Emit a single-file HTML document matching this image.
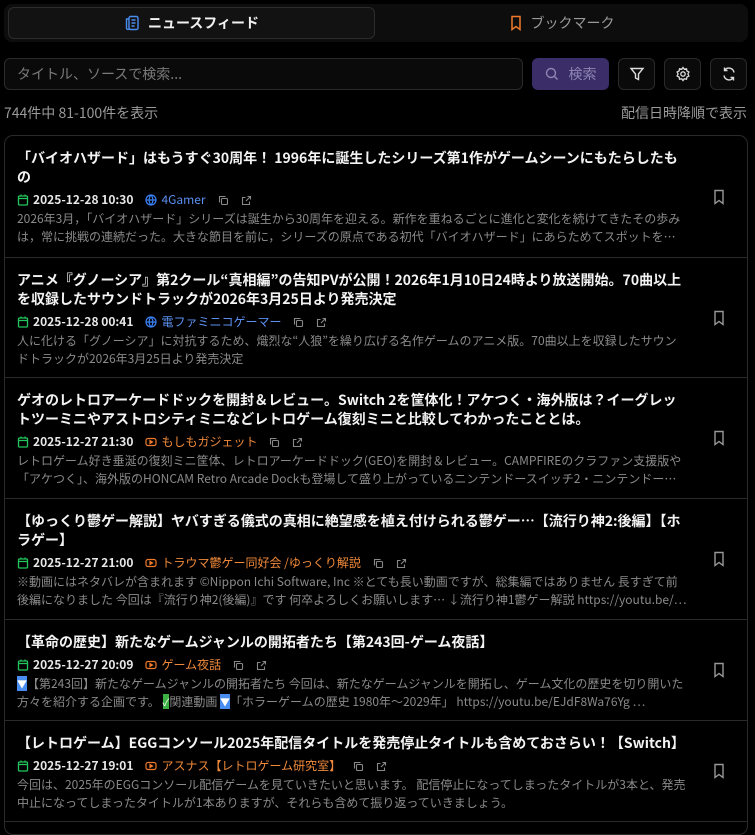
<!DOCTYPE html>
<html><head><meta charset="utf-8"><style>
*{box-sizing:border-box;margin:0;padding:0}
body{width:755px;height:797px;overflow:hidden;background:#000;font-family:"Noto Sans CJK JP","Liberation Sans",sans-serif;color:#eee}
.tabs{position:absolute;left:4px;top:4px;width:744px;height:38px;background:#0d0d0d;border-radius:8px}
.tab{position:absolute;top:3px;height:32px;display:flex;align-items:center;justify-content:center;font-size:14px;gap:8px}
.t1{left:4px;width:367px;background:#121212;border:1px solid #2c2c2c;border-radius:6px;font-weight:bold;color:#f2f2f2}
.t2{left:375px;width:365px;color:#9a9a9a}
.search{position:absolute;left:4px;top:58px;width:519px;height:32px;border:1px solid #2a2a2a;border-radius:6px;background:#0a0a0a;font-size:14px;color:#7a7a7a;padding:0 12px;display:flex;align-items:center}
.sbtn{position:absolute;left:532px;top:58px;width:77px;height:32px;background:#3a2d68;border-radius:6px;color:#8f86b3;font-size:14px;display:flex;align-items:center;justify-content:center;gap:10px}
.ib{position:absolute;top:58px;width:37px;height:32px;border:1px solid #2a2a2a;border-radius:6px;background:#0a0a0a;display:flex;align-items:center;justify-content:center}
.cnt{position:absolute;top:103px;font-size:14px;line-height:20px;color:#9a9a9a}
.card{position:absolute;left:4px;top:135px;width:744px;height:700px;border:1px solid #2a2a2a;border-radius:9px;overflow:hidden}
.it{position:relative;padding:13px 60px 0 12px;border-bottom:1px solid #2a2a2a}
.tt{font-size:14px;font-weight:bold;line-height:19px;color:#f3f3f3}
.mt{margin-top:4px;height:18px;display:flex;align-items:center;font-size:12px;line-height:18px}
.dt{color:#e8e8e8;font-weight:bold;margin-left:4px}
.src{display:flex;align-items:center;gap:4px;margin-left:12px}
.ds{margin-top:1px;font-size:12px;line-height:18px;color:#8a8a8a;overflow:hidden;height:36px}
.bm{position:absolute;right:21px;top:50%;margin-top:-8px}
.gi{margin-left:12px}
</style></head><body>
<div class="tabs">
<div class="tab t1"><svg width="16" height="16" viewBox="0 0 16 16" fill="none" stroke="#4a8df0" stroke-width="1.4"><rect x="5" y="1.5" width="9" height="13" rx="1.5"/><path d="M5 4H2.5v9a1.5 1.5 0 003 0M7.5 5h4M7.5 8h4M7.5 11h3"/></svg>ニュースフィード</div>
<div class="tab t2"><svg width="14" height="16" viewBox="0 0 14 16" fill="none" stroke="#f07a2a" stroke-width="1.5"><path d="M3 1.5h8v13l-4-3-4 3z"/></svg>ブックマーク</div>
</div>
<div class="search">タイトル、ソースで検索...</div>
<div class="sbtn"><svg width="14" height="14" viewBox="0 0 14 14" fill="none" stroke="#8f86b3" stroke-width="1.4"><circle cx="6" cy="6" r="4.5"/><path d="M9.5 9.5l3 3"/></svg>検索</div>
<div class="ib" style="left:618px"><svg width="16" height="16" viewBox="0 0 16 16" fill="none" stroke="#ddd" stroke-width="1.4"><path d="M2 2.5h12L9.5 8v5.5l-3-1.5V8z"/></svg></div>
<div class="ib" style="left:664px"><svg width="16" height="16" viewBox="0 0 16 16" fill="none" stroke="#ddd" stroke-width="1.3"><circle cx="8" cy="8" r="2.2"/><path d="M8 1.5l1.3 1.8 2.2-.5.4 2.2 2 1-1 2 1 2-2 1-.4 2.2-2.2-.5L8 14.5l-1.3-1.8-2.2.5-.4-2.2-2-1 1-2-1-2 2-1 .4-2.2 2.2.5z"/></svg></div>
<div class="ib" style="left:710px"><svg width="16" height="16" viewBox="0 0 16 16" fill="none" stroke="#ddd" stroke-width="1.4"><path d="M13 6.5A5.2 5.2 0 003.5 4.5M3 9.5a5.2 5.2 0 009.5 2M3.5 1.5v3h3M12.5 14.5v-3h-3"/></svg></div>
<div class="cnt" style="left:4px">744件中 81-100件を表示</div>
<div class="cnt" style="right:8px">配信日時降順で表示</div>

<div class="card">
<div class="it" style="height:122px"><div class="tt">「バイオハザード」はもうすぐ30周年！ 1996年に誕生したシリーズ第1作がゲームシーンにもたらしたもの</div>
<div class="mt"><svg width="12" height="12" viewBox="0 0 12 12" fill="none" stroke="#22c55e" stroke-width="1.3"><rect x="1.5" y="2" width="9" height="9" rx="1"/><path d="M1.5 4.5h9M4 .5v2M8 .5v2"/></svg><span class="dt">2025-12-28 10:30</span><span class="src" style="color:#5b8ff0"><svg width="12" height="12" viewBox="0 0 12 12" fill="none" stroke="#3b82f6" stroke-width="1.2"><circle cx="6" cy="6" r="5"/><path d="M1 6h10M6 1c-2.5 3-2.5 7 0 10M6 1c2.5 3 2.5 7 0 10"/></svg>4Gamer</span><svg class="gi" width="11" height="11" viewBox="0 0 11 11" fill="none" stroke="#888" stroke-width="1.1"><rect x="3.5" y="3.5" width="6" height="6" rx="1"/><path d="M1.5 7.5v-6h6"/></svg><svg class="gi" width="11" height="11" viewBox="0 0 11 11" fill="none" stroke="#888" stroke-width="1.1"><path d="M8.5 6.5v3h-7v-7h3M6.5 1.5h3v3M9.5 1.5l-4.5 4.5"/></svg></div>
<div class="ds">2026年3月，「バイオハザード」シリーズは誕生から30周年を迎える。新作を重ねるごとに進化と変化を続けてきたその歩みは，常に挑戦の連続だった。大きな節目を前に，シリーズの原点である初代「バイオハザード」にあらためてスポットを…</div>
<svg class="bm" width="14" height="16" viewBox="0 0 14 16" fill="none" stroke="#999" stroke-width="1.4"><path d="M3 1.5h8v13l-4-3-4 3z"/></svg></div>

<div class="it" style="height:120px"><div class="tt">アニメ『グノーシア』第2クール“真相編”の告知PVが公開！2026年1月10日24時より放送開始。70曲以上を収録したサウンドトラックが2026年3月25日より発売決定</div>
<div class="mt"><svg width="12" height="12" viewBox="0 0 12 12" fill="none" stroke="#22c55e" stroke-width="1.3"><rect x="1.5" y="2" width="9" height="9" rx="1"/><path d="M1.5 4.5h9M4 .5v2M8 .5v2"/></svg><span class="dt">2025-12-28 00:41</span><span class="src" style="color:#5b8ff0"><svg width="12" height="12" viewBox="0 0 12 12" fill="none" stroke="#3b82f6" stroke-width="1.2"><circle cx="6" cy="6" r="5"/><path d="M1 6h10M6 1c-2.5 3-2.5 7 0 10M6 1c2.5 3 2.5 7 0 10"/></svg>電ファミニコゲーマー</span><svg class="gi" width="11" height="11" viewBox="0 0 11 11" fill="none" stroke="#888" stroke-width="1.1"><rect x="3.5" y="3.5" width="6" height="6" rx="1"/><path d="M1.5 7.5v-6h6"/></svg><svg class="gi" width="11" height="11" viewBox="0 0 11 11" fill="none" stroke="#888" stroke-width="1.1"><path d="M8.5 6.5v3h-7v-7h3M6.5 1.5h3v3M9.5 1.5l-4.5 4.5"/></svg></div>
<div class="ds">人に化ける「グノーシア」に対抗するため、熾烈な“人狼”を繰り広げる名作ゲームのアニメ版。70曲以上を収録したサウンドトラックが2026年3月25日より発売決定</div>
<svg class="bm" width="14" height="16" viewBox="0 0 14 16" fill="none" stroke="#999" stroke-width="1.4"><path d="M3 1.5h8v13l-4-3-4 3z"/></svg></div>

<div class="it" style="height:121px"><div class="tt">ゲオのレトロアーケードドックを開封＆レビュー。Switch 2を筐体化！アケつく・海外版は？イーグレットツーミニやアストロシティミニなどレトロゲーム復刻ミニと比較してわかったこととは。</div>
<div class="mt"><svg width="12" height="12" viewBox="0 0 12 12" fill="none" stroke="#22c55e" stroke-width="1.3"><rect x="1.5" y="2" width="9" height="9" rx="1"/><path d="M1.5 4.5h9M4 .5v2M8 .5v2"/></svg><span class="dt">2025-12-27 21:30</span><span class="src" style="color:#f0893a"><svg width="12" height="12" viewBox="0 0 12 12" fill="none" stroke="#f07a2a" stroke-width="1.2"><rect x="1" y="2.5" width="10" height="7" rx="2"/><path d="M5 4.5v3l2.5-1.5z" fill="#f07a2a"/></svg>もしもガジェット</span><svg class="gi" width="11" height="11" viewBox="0 0 11 11" fill="none" stroke="#888" stroke-width="1.1"><rect x="3.5" y="3.5" width="6" height="6" rx="1"/><path d="M1.5 7.5v-6h6"/></svg><svg class="gi" width="11" height="11" viewBox="0 0 11 11" fill="none" stroke="#888" stroke-width="1.1"><path d="M8.5 6.5v3h-7v-7h3M6.5 1.5h3v3M9.5 1.5l-4.5 4.5"/></svg></div>
<div class="ds">レトロゲーム好き垂涎の復刻ミニ筐体、レトロアーケードドック(GEO)を開封＆レビュー。CAMPFIREのクラファン支援版や「アケつく」、海外版のHONCAM Retro Arcade Dockも登場して盛り上がっているニンテンドースイッチ2・ニンテンドー…</div>
<svg class="bm" width="14" height="16" viewBox="0 0 14 16" fill="none" stroke="#999" stroke-width="1.4"><path d="M3 1.5h8v13l-4-3-4 3z"/></svg></div>

<div class="it" style="height:121px"><div class="tt">【ゆっくり鬱ゲー解説】ヤバすぎる儀式の真相に絶望感を植え付けられる鬱ゲー…【流行り神2:後編】【ホラゲー】</div>
<div class="mt"><svg width="12" height="12" viewBox="0 0 12 12" fill="none" stroke="#22c55e" stroke-width="1.3"><rect x="1.5" y="2" width="9" height="9" rx="1"/><path d="M1.5 4.5h9M4 .5v2M8 .5v2"/></svg><span class="dt">2025-12-27 21:00</span><span class="src" style="color:#f0893a"><svg width="12" height="12" viewBox="0 0 12 12" fill="none" stroke="#f07a2a" stroke-width="1.2"><rect x="1" y="2.5" width="10" height="7" rx="2"/><path d="M5 4.5v3l2.5-1.5z" fill="#f07a2a"/></svg>トラウマ鬱ゲー同好会 /ゆっくり解説</span><svg class="gi" width="11" height="11" viewBox="0 0 11 11" fill="none" stroke="#888" stroke-width="1.1"><rect x="3.5" y="3.5" width="6" height="6" rx="1"/><path d="M1.5 7.5v-6h6"/></svg><svg class="gi" width="11" height="11" viewBox="0 0 11 11" fill="none" stroke="#888" stroke-width="1.1"><path d="M8.5 6.5v3h-7v-7h3M6.5 1.5h3v3M9.5 1.5l-4.5 4.5"/></svg></div>
<div class="ds">※動画にはネタバレが含まれます ©Nippon Ichi Software, Inc ※とても長い動画ですが、総集編ではありません 長すぎて前後編になりました 今回は『流行り神2(後編)』です 何卒よろしくお願いします… ↓流行り神1鬱ゲー解説 https://youtu.be/…</div>
<svg class="bm" width="14" height="16" viewBox="0 0 14 16" fill="none" stroke="#999" stroke-width="1.4"><path d="M3 1.5h8v13l-4-3-4 3z"/></svg></div>

<div class="it" style="height:101px"><div class="tt">【革命の歴史】新たなゲームジャンルの開拓者たち【第243回-ゲーム夜話】</div>
<div class="mt"><svg width="12" height="12" viewBox="0 0 12 12" fill="none" stroke="#22c55e" stroke-width="1.3"><rect x="1.5" y="2" width="9" height="9" rx="1"/><path d="M1.5 4.5h9M4 .5v2M8 .5v2"/></svg><span class="dt">2025-12-27 20:09</span><span class="src" style="color:#f0893a"><svg width="12" height="12" viewBox="0 0 12 12" fill="none" stroke="#f07a2a" stroke-width="1.2"><rect x="1" y="2.5" width="10" height="7" rx="2"/><path d="M5 4.5v3l2.5-1.5z" fill="#f07a2a"/></svg>ゲーム夜話</span><svg class="gi" width="11" height="11" viewBox="0 0 11 11" fill="none" stroke="#888" stroke-width="1.1"><rect x="3.5" y="3.5" width="6" height="6" rx="1"/><path d="M1.5 7.5v-6h6"/></svg><svg class="gi" width="11" height="11" viewBox="0 0 11 11" fill="none" stroke="#888" stroke-width="1.1"><path d="M8.5 6.5v3h-7v-7h3M6.5 1.5h3v3M9.5 1.5l-4.5 4.5"/></svg></div>
<div class="ds"><span style="background:#4a8df0;color:#fff;font-size:10px">▼</span>【第243回】新たなゲームジャンルの開拓者たち 今回は、新たなゲームジャンルを開拓し、ゲーム文化の歴史を切り開いた方々を紹介する企画です。 <span style="background:#3cb043;color:#fff;font-size:10px">✓</span>関連動画 <span style="background:#4a8df0;color:#fff;font-size:10px">▼</span>「ホラーゲームの歴史 1980年～2029年」 https://youtu.be/EJdF8Wa76Yg …</div>
<svg class="bm" width="14" height="16" viewBox="0 0 14 16" fill="none" stroke="#999" stroke-width="1.4"><path d="M3 1.5h8v13l-4-3-4 3z"/></svg></div>

<div class="it" style="height:101px"><div class="tt">【レトロゲーム】EGGコンソール2025年配信タイトルを発売停止タイトルも含めておさらい！【Switch】</div>
<div class="mt"><svg width="12" height="12" viewBox="0 0 12 12" fill="none" stroke="#22c55e" stroke-width="1.3"><rect x="1.5" y="2" width="9" height="9" rx="1"/><path d="M1.5 4.5h9M4 .5v2M8 .5v2"/></svg><span class="dt">2025-12-27 19:01</span><span class="src" style="color:#f0893a"><svg width="12" height="12" viewBox="0 0 12 12" fill="none" stroke="#f07a2a" stroke-width="1.2"><rect x="1" y="2.5" width="10" height="7" rx="2"/><path d="M5 4.5v3l2.5-1.5z" fill="#f07a2a"/></svg>アスナス【レトロゲーム研究室】</span><svg class="gi" width="11" height="11" viewBox="0 0 11 11" fill="none" stroke="#888" stroke-width="1.1"><rect x="3.5" y="3.5" width="6" height="6" rx="1"/><path d="M1.5 7.5v-6h6"/></svg><svg class="gi" width="11" height="11" viewBox="0 0 11 11" fill="none" stroke="#888" stroke-width="1.1"><path d="M8.5 6.5v3h-7v-7h3M6.5 1.5h3v3M9.5 1.5l-4.5 4.5"/></svg></div>
<div class="ds">今回は、2025年のEGGコンソール配信ゲームを見ていきたいと思います。 配信停止になってしまったタイトルが3本と、発売中止になってしまったタイトルが1本ありますが、それらも含めて振り返っていきましょう。</div>
<svg class="bm" width="14" height="16" viewBox="0 0 14 16" fill="none" stroke="#999" stroke-width="1.4"><path d="M3 1.5h8v13l-4-3-4 3z"/></svg></div>
</div>
</body></html>
